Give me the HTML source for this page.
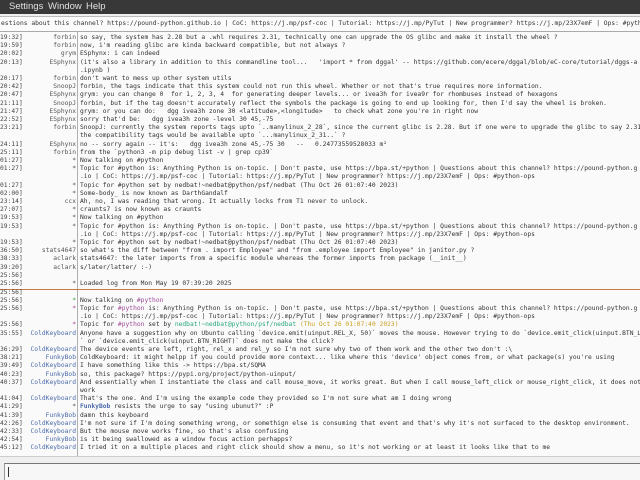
<!DOCTYPE html>
<html><head><meta charset="utf-8"><style>
*{margin:0;padding:0;box-sizing:border-box}
body{width:640px;height:480px;overflow:hidden;background:#efefef;position:relative;font-family:"DejaVu Sans Mono","Liberation Mono",monospace;font-size:6.3px;color:#333}
#menu{position:absolute;left:0;top:0;width:640px;height:14px;background:#383838;color:#e0e0e0;font-family:"Liberation Sans","DejaVu Sans",sans-serif;font-size:9.5px}
#menu span{position:absolute;top:1px}
#topic{position:absolute;left:0;top:16px;width:640px;height:16px;background:#fbfbfb;border-top:1px solid #bbb;border-bottom:1px solid #aaa;white-space:pre;overflow:hidden;line-height:14px;padding-left:1px}
#chat{position:absolute;left:0;top:32px;width:640px;height:425px;background:#fafafa;border-bottom:1px solid #ccc;overflow:hidden}
#vline{position:absolute;left:77px;top:0;width:1px;height:425px;background:#b0b0b0}
.l{position:absolute;left:0;width:640px;height:8.2px;line-height:8.2px;white-space:pre}
.t{position:absolute;left:0;color:#444}
.n{position:absolute;right:564px;color:#555;text-align:right}
.m{position:absolute;left:80px}
.b{color:#4a6aa8}
.g{color:#3a9a3a}
.p{color:#a04a9a}
.c{color:#2aa880}
.y{color:#c8a020}
#sep{position:absolute;left:0;top:257px;width:640px;height:1px;background:#c87a48}
#after{position:absolute;left:0;top:-3.4px;width:640px;height:430px}
#input{position:absolute;left:4px;top:463px;width:636px;height:17px;background:#f7f7f7;border-top:1px solid #777;border-left:1px solid #999}
#cur{position:absolute;left:3px;top:3px;width:1px;height:10px;background:#333}
</style></head><body>
<div id="menu"><span style="left:-3px">r</span><span style="left:9px">Settings</span><span style="left:48px">Window</span><span style="left:86px">Help</span></div>
<div id="topic">estions about this channel? https://pound-python.github.io | CoC: https://j.mp/psf-coc | Tutorial: https://j.mp/PyTut | New programmer? https://j.mp/23X7emF | Ops: #python-ops</div>
<div id="chat">
<div id="vline"></div>
<div id="sep"></div>
<div class="l" style="top:2px"><span class="t">19:32]</span><span class="n">forbin</span><span class="m">so say, the system has 2.28 but a .whl requires 2.31, technically one can upgrade the OS glibc and make it install the wheel ?</span></div>
<div class="l" style="top:10.2px"><span class="t">19:59]</span><span class="n">forbin</span><span class="m">now, i'm reading glibc are kinda backward compatible, but not always ?</span></div>
<div class="l" style="top:18.4px"><span class="t">20:02]</span><span class="n">grym</span><span class="m">ESphynx: i can indeed</span></div>
<div class="l" style="top:26.6px"><span class="t">20:13]</span><span class="n">ESphynx</span><span class="m">(it's also a library in addition to this commandline tool...   'import * from dggal' -- https://github.com/ecere/dggal/blob/eC-core/tutorial/dggs-a</span></div>
<div class="l" style="top:34.8px"><span class="m">.ipynb )</span></div>
<div class="l" style="top:43px"><span class="t">20:17]</span><span class="n">forbin</span><span class="m">don't want to mess up other system utils</span></div>
<div class="l" style="top:51.2px"><span class="t">20:42]</span><span class="n">SnoopJ</span><span class="m">forbin, the tags indicate that this system could not run this wheel. Whether or not that's true requires more information.</span></div>
<div class="l" style="top:59.4px"><span class="t">20:47]</span><span class="n">ESphynx</span><span class="m">grym: you can change 0  for 1, 2, 3, 4  for generating deeper levels... or ivea3h for ivea9r for rhombuses instead of hexagons</span></div>
<div class="l" style="top:67.6px"><span class="t">21:11]</span><span class="n">SnoopJ</span><span class="m">forbin, but if the tag doesn't accurately reflect the symbols the package is going to end up looking for, then I'd say the wheel is broken.</span></div>
<div class="l" style="top:75.8px"><span class="t">21:47]</span><span class="n">ESphynx</span><span class="m">grym: or you can do:   dgg ivea3h zone 30 &lt;latitude&gt;,&lt;longitude&gt;   to check what zone you're in right now</span></div>
<div class="l" style="top:84px"><span class="t">22:52]</span><span class="n">ESphynx</span><span class="m">sorry that'd be:   dgg ivea3h zone -level 30 45,-75</span></div>
<div class="l" style="top:92.2px"><span class="t">23:21]</span><span class="n">forbin</span><span class="m">SnoopJ: currently the system reports tags upto `..manylinux_2_28`, since the current glibc is 2.28. But if one were to upgrade the glibc to say 2.31</span></div>
<div class="l" style="top:100.4px"><span class="m">the compatibility tags would be available upto `...manylinux_2_31..` ?</span></div>
<div class="l" style="top:108.6px"><span class="t">24:11]</span><span class="n">ESphynx</span><span class="m">no -- sorry again -- it's:   dgg ivea3h zone 45,-75 30   --   0.24773559528033 m²</span></div>
<div class="l" style="top:116.8px"><span class="t">25:11]</span><span class="n">forbin</span><span class="m">from the `python3 -m pip debug list -v | grep cp39`</span></div>
<div class="l" style="top:125px"><span class="t">01:27]</span><span class="n">*</span><span class="m">Now talking on #python</span></div>
<div class="l" style="top:133.2px"><span class="t">01:27]</span><span class="n">*</span><span class="m">Topic for #python is: Anything Python is on-topic. | Don't paste, use https://bpa.st/+python | Questions about this channel? https://pound-python.g</span></div>
<div class="l" style="top:141.4px"><span class="m">.io | CoC: https://j.mp/psf-coc | Tutorial: https://j.mp/PyTut | New programmer? https://j.mp/23X7emF | Ops: #python-ops</span></div>
<div class="l" style="top:149.6px"><span class="t">01:27]</span><span class="n">*</span><span class="m">Topic for #python set by nedbat!~nedbat@python/psf/nedbat (Thu Oct 26 01:07:40 2023)</span></div>
<div class="l" style="top:157.8px"><span class="t">02:00]</span><span class="n">*</span><span class="m">Some-body_ is now known as DarthGandalf</span></div>
<div class="l" style="top:166px"><span class="t">23:14]</span><span class="n">ccx</span><span class="m">Ah, no, I was reading that wrong. It actually locks from T1 never to unlock.</span></div>
<div class="l" style="top:174.2px"><span class="t">27:07]</span><span class="n">*</span><span class="m">craunts7 is now known as craunts</span></div>
<div class="l" style="top:182.4px"><span class="t">19:53]</span><span class="n">*</span><span class="m">Now talking on #python</span></div>
<div class="l" style="top:190.6px"><span class="t">19:53]</span><span class="n">*</span><span class="m">Topic for #python is: Anything Python is on-topic. | Don't paste, use https://bpa.st/+python | Questions about this channel? https://pound-python.g</span></div>
<div class="l" style="top:198.8px"><span class="m">.io | CoC: https://j.mp/psf-coc | Tutorial: https://j.mp/PyTut | New programmer? https://j.mp/23X7emF | Ops: #python-ops</span></div>
<div class="l" style="top:207px"><span class="t">19:53]</span><span class="n">*</span><span class="m">Topic for #python set by nedbat!~nedbat@python/psf/nedbat (Thu Oct 26 01:07:40 2023)</span></div>
<div class="l" style="top:215.2px"><span class="t">36:50]</span><span class="n">stats4647</span><span class="m">so what's the diff between "from . import Employee" and "from .employee import Employee" in janitor.py ?</span></div>
<div class="l" style="top:223.4px"><span class="t">38:33]</span><span class="n">aclark</span><span class="m">stats4647: the later imports from a specific module whereas the former imports from package (__init__)</span></div>
<div class="l" style="top:231.6px"><span class="t">39:20]</span><span class="n">aclark</span><span class="m">s/later/latter/ :-)</span></div>
<div class="l" style="top:239.8px"><span class="t">25:56]</span></div>
<div class="l" style="top:248px"><span class="t">25:56]</span><span class="n">*</span><span class="m">Loaded log from Mon May 19 07:39:20 2025</span></div>
<div id="after">
<div class="l" style="top:260px"><span class="t">25:56]</span></div>
<div class="l" style="top:268.2px"><span class="t">25:56]</span><span class="n g">*</span><span class="m">Now talking on <span class="p">#python</span></span></div>
<div class="l" style="top:276.4px"><span class="t">25:56]</span><span class="n p">*</span><span class="m">Topic for <span class="p">#python</span> is: Anything Python is on-topic. | Don't paste, use https://bpa.st/+python | Questions about this channel? https://pound-python.g</span></div>
<div class="l" style="top:284.6px"><span class="m">.io | CoC: https://j.mp/psf-coc | Tutorial: https://j.mp/PyTut | New programmer? https://j.mp/23X7emF | Ops: #python-ops</span></div>
<div class="l" style="top:292.8px"><span class="t">25:56]</span><span class="n p">*</span><span class="m">Topic for <span class="p">#python</span> set by <span class="c">nedbat!~nedbat@python/psf/nedbat</span> <span class="y">(Thu Oct 26 01:07:40 2023)</span></span></div>
<div class="l" style="top:301px"><span class="t">35:55]</span><span class="n b">ColdKeyboard</span><span class="m">Anyone have a suggestion why on Ubuntu calling `device.emit(uinput.REL_X, 50)` moves the mouse. However trying to do `device.emit_click(uinput.BTN_L</span></div>
<div class="l" style="top:309.2px"><span class="m">` or `device.emit_click(uinput.BTN_RIGHT)` does not make the click?</span></div>
<div class="l" style="top:317.4px"><span class="t">36:29]</span><span class="n b">ColdKeyboard</span><span class="m">The device events are left, right, rel_x and rel_y so I'm not sure why two of them work and the other two don't :\</span></div>
<div class="l" style="top:325.6px"><span class="t">38:21]</span><span class="n b">FunkyBob</span><span class="m">ColdKeyboard: it might helpp if you could provide more context... like where this 'device' object comes from, or what package(s) you're using</span></div>
<div class="l" style="top:333.8px"><span class="t">39:49]</span><span class="n b">ColdKeyboard</span><span class="m">I have something like this -&gt; https://bpa.st/SQMA</span></div>
<div class="l" style="top:342px"><span class="t">40:23]</span><span class="n b">FunkyBob</span><span class="m">so, this package? https://pypi.org/project/python-uinput/</span></div>
<div class="l" style="top:350.2px"><span class="t">40:37]</span><span class="n b">ColdKeyboard</span><span class="m">And essentially when I instantiate the class and call mouse_move, it works great. But when I call mouse_left_click or mouse_right_click, it does not</span></div>
<div class="l" style="top:358.4px"><span class="m">work</span></div>
<div class="l" style="top:366.6px"><span class="t">41:04]</span><span class="n b">ColdKeyboard</span><span class="m">That's the one. And I'm using the example code they provided so I'm not sure what am I doing wrong</span></div>
<div class="l" style="top:374.8px"><span class="t">41:29]</span><span class="n">*</span><span class="m"><b class="b">FunkyBob</b> resists the urge to say "using ubunut?" :P</span></div>
<div class="l" style="top:383px"><span class="t">41:39]</span><span class="n b">FunkyBob</span><span class="m">damn this keyboard</span></div>
<div class="l" style="top:391.2px"><span class="t">42:26]</span><span class="n b">ColdKeyboard</span><span class="m">I'm not sure if I'm doing something wrong, or somethign else is consuming that event and that's why it's not surfaced to the desktop environment.</span></div>
<div class="l" style="top:399.4px"><span class="t">42:33]</span><span class="n b">ColdKeyboard</span><span class="m">But the mouse move works fine, so that's also confusing</span></div>
<div class="l" style="top:407.6px"><span class="t">42:54]</span><span class="n b">FunkyBob</span><span class="m">is it being swallowed as a window focus action perhapps?</span></div>
<div class="l" style="top:415.8px"><span class="t">45:12]</span><span class="n b">ColdKeyboard</span><span class="m">I tried it on a multiple places and right click should show a menu, so it's not working or at least it looks like that to me</span></div>
</div>
</div>
<div id="input"><div id="cur"></div></div>
</body></html>
